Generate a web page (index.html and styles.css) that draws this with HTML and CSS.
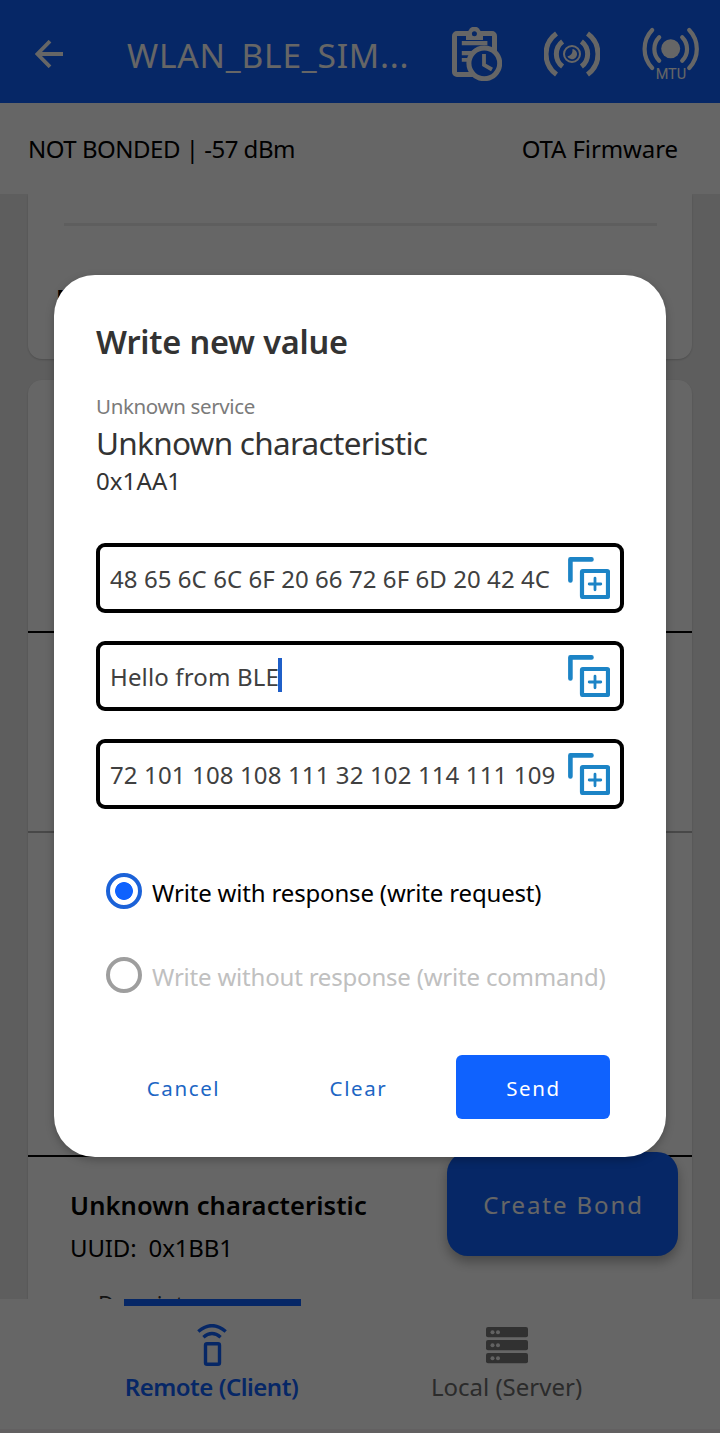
FILE: index.html
```html
<!DOCTYPE html>
<html lang="en">
<head>
<meta charset="utf-8">
<title>Write new value</title>
<link rel="stylesheet" href="styles.css">
</head>
<body>
<svg class="defs" width="0" height="0">
  <symbol id="copy-add" viewBox="0 0 42 42">
    <path d="M2.4 23.5V2.4H23.5" fill="none" stroke="#1c84c6" stroke-width="4.6" stroke-linecap="round" stroke-linejoin="round"/>
    <rect x="14" y="14" width="26" height="26" rx="0.8" fill="none" stroke="#1c84c6" stroke-width="4.2"/>
    <path d="M27 21.2v11.6M21.2 27h11.6" stroke="#1c84c6" stroke-width="2.8" stroke-linecap="round"/>
  </symbol>
</svg>
<div class="app">
  <header class="toolbar">
    <svg width="28" height="28" viewBox="0 0 28 28" fill="none" stroke="#fff" stroke-width="3.8"><path d="M28 14H2.6M15 1.2 2.4 14 15 26.8"/></svg>
    <h1 class="device">WLAN_BLE_SIM...</h1>
    <div class="actions">
      <svg width="50" height="54" viewBox="0 0 50 54">
        <rect x="2.5" y="6.5" width="40" height="41" rx="2.5" fill="none" stroke="#fff" stroke-width="5"/>
        <circle cx="22.4" cy="6" r="6.3" fill="#fff"/>
        <path d="M14 4h17v9H14z" fill="#fff"/>
        <circle cx="22.4" cy="6.8" r="2.5" fill="#0f62fe"/>
        <path d="M9.8 14h25.6v4.3H9.8zM9.8 24h12v4.3h-12zM9.8 31h8v3.8h-8z" fill="#fff"/>
        <circle cx="32.3" cy="36.3" r="15.4" fill="#0f62fe" stroke="#fff" stroke-width="5"/>
        <path d="M32 27v10.8l8 4.7" fill="none" stroke="#fff" stroke-width="3.8"/>
      </svg>
      <svg width="56" height="48" viewBox="-28 -24 56 48" fill="none" stroke="#fff" stroke-width="5">
        <path d="M-15.5-20.5a25.3 25.3 0 0 0 0 41M15.5-20.5a25.3 25.3 0 0 1 0 41M-9.4-12.6a15.8 15.8 0 0 0 0 25.2M9.4-12.6a15.8 15.8 0 0 1 0 25.2"/>
        <circle r="8" stroke-width="2"/>
        <path d="M0.5-5A5.1 5.1 0 1 1-4.6 2.4Q1 1.4 0.5-5z" fill="#fff" stroke="none"/>
      </svg>
      <svg width="58" height="58" viewBox="0 0 58 58" fill="none" stroke="#fff" stroke-width="4.2" stroke-linecap="round">
        <path d="M10.2 5a27.5 27.5 0 0 0 0 38M47.2 5a27.5 27.5 0 0 1 0 38M17.2 12.2a16.8 16.8 0 0 0 0 23.6M40.2 12.2a16.8 16.8 0 0 1 0 23.6"/>
        <circle cx="28.7" cy="23.7" r="9.5" fill="#fff" stroke="none"/>
        <text class="mtu-label" x="28.9" y="53.5" text-anchor="middle">MTU</text>
      </svg>
    </div>
  </header>
  <div class="status">
    <span class="bond">NOT BONDED | -57 dBm</span>
    <span class="ota">OTA Firmware</span>
  </div>
  <main class="services">
    <section class="card card-first">
      <hr class="rule">
      <div class="more">More Info</div>
    </section>
    <section class="card card-list">
      <div class="row row-a"></div>
      <div class="row row-b"></div>
      <div class="row row-c"></div>
      <div class="char">
        <div class="char-name">Unknown characteristic</div>
        <div class="char-uuid">UUID:&nbsp; 0x1BB1</div>
        <div class="char-desc">Descriptors</div>
      </div>
    </section>
  </main>
  <nav class="tabs">
    <div class="tab active">
      <svg width="30" height="42" viewBox="0 0 30 42" fill="none" stroke="#0f62fe" stroke-width="3.4">
        <path d="M1.3 7.5Q15-4.2 28.7 7.5M6.4 13.2Q15 6 23.6 13.2"/>
        <rect x="8.5" y="19.7" width="14" height="20.6" rx="1.5"/>
      </svg>
      <span class="tab-label">Remote (Client)</span>
    </div>
    <div class="tab">
      <svg width="42" height="42" viewBox="0 0 42 42">
        <g fill="#7c7c7c"><rect y="3" width="42" height="10.3" rx="2"/><rect y="16" width="42" height="10.3" rx="2"/><rect y="29" width="42" height="10.3" rx="2"/></g>
        <g fill="#f4f4f4"><circle cx="6.5" cy="8.2" r="2"/><circle cx="12" cy="8.2" r="2"/><circle cx="6.5" cy="21.2" r="2"/><circle cx="12" cy="21.2" r="2"/><circle cx="6.5" cy="34.2" r="2"/><circle cx="12" cy="34.2" r="2"/></g>
      </svg>
      <span class="tab-label">Local (Server)</span>
    </div>
  </nav>
  <div class="fab">Create Bond</div>
  <div class="scrim">
    <div class="dialog">
      <h2 class="title">Write new value</h2>
      <div class="service">Unknown service</div>
      <div class="characteristic">Unknown characteristic</div>
      <div class="uuid">0x1AA1</div>
      <div class="fields">
        <div class="field"><span class="hex">48 65 6C 6C 6F 20 66 72 6F 6D 20 42 4C</span><svg class="add"><use href="#copy-add"/></svg></div>
        <div class="field"><span class="ascii">Hello from BLE</span><i class="caret"></i><svg class="add"><use href="#copy-add"/></svg></div>
        <div class="field"><span class="dec">72 101 108 108 111 32 102 114 111 109</span><svg class="add"><use href="#copy-add"/></svg></div>
      </div>
      <div class="options">
        <div class="option on"><i class="radio"></i><span>Write with response (write request)</span></div>
        <div class="option off"><i class="radio"></i><span>Write without response (write command)</span></div>
      </div>
      <div class="buttons">
        <div class="btn">Cancel</div>
        <div class="btn">Clear</div>
        <div class="btn send">Send</div>
      </div>
    </div>
  </div>
</div>
</body>
</html>
```
FILE: styles.css
```css
* { box-sizing: border-box; }
body { margin: 0; font-family: "Noto Sans", "Open Sans", sans-serif; font-weight: 400; color: #000; }
h1, h2 { margin: 0; font-weight: inherit; }
svg { display: block; flex: none; }
.defs { position: absolute; }
.app { position: relative; width: 720px; height: 1433px; display: flex; flex-direction: column; overflow: hidden; background: #ebebeb; white-space: nowrap; }

.toolbar { flex: none; height: 103px; display: flex; align-items: center; padding: 5px 20px 0 35px; background: #0f62fe; color: #fff; }
.device { margin-left: 64px; width: 325px; font-size: 33.5px; letter-spacing: .8px; line-height: 46px; padding-top: 2px; }
.actions { display: flex; align-items: center; gap: 42px; }
.mtu-label { font: 400 14.5px Roboto, sans-serif; fill: #fff; stroke: none; }

.status { flex: none; height: 91px; display: flex; align-items: center; justify-content: space-between; padding: 0 42px 0 28px; background: #fff; font-size: 24px; }
.bond { letter-spacing: -.49px; }
.ota { letter-spacing: -.1px; }

.services { flex: none; height: 1105px; padding: 0 28px; display: flex; flex-direction: column; gap: 21px; overflow: hidden; }
.card { flex: none; background: #fff; box-shadow: 0 1px 2px rgba(0,0,0,.18); }
.card-first { height: 165px; padding: 29px 35px 0 28px; border-radius: 0 0 14px 14px; }
.rule { height: 3px; margin: 0 0 0 8px; border: 0; background: #ececec; }
.more { margin-top: 55px; font-size: 24px; line-height: 34px; font-weight: 600; }
.card-list { height: 940px; border-radius: 14px 14px 0 0; }
.row { border-bottom: 2px solid #000; }
.row-a { height: 253px; }
.row-b { height: 200px; border-color: #b4b4b4; }
.row-c { height: 324px; }
.char { padding: 28px 42px 0; }
.char-name { font-size: 25.5px; font-weight: 600; letter-spacing: .1px; line-height: 40px; }
.char-uuid { font-size: 24px; letter-spacing: -.15px; line-height: 40px; margin-top: 3px; }
.char-desc { margin: 13px 0 0 28px; font-size: 22px; line-height: 44px; color: #333; }

.tabs { flex: none; height: 134px; display: flex; padding: 0 66px 0 64px; background: #fff; border-bottom: 4px solid #f4eff2; font-size: 24px; color: #6c6c6c; }
.tab { flex: 1; display: flex; flex-direction: column; align-items: center; padding-top: 25px; }
.tab-label { line-height: 40px; margin-top: 1px; }
.active { color: #0f62fe; font-weight: 600; letter-spacing: -.5px; background: linear-gradient(#0f62fe, #0f62fe) 60px 0 / 177px 7px no-repeat; }

.fab { position: absolute; left: 447px; top: 1152px; width: 231px; height: 104px; border-radius: 21px; background: #0f62fe; color: #fff; box-shadow: 0 6px 12px rgba(0,0,0,.3); font-size: 24px; line-height: 106px; text-align: center; letter-spacing: 1.9px; text-indent: 2px; }

.scrim { position: absolute; inset: 0; padding: 275px 54px 0; background: rgba(0,0,0,.6); }
.dialog { height: 882px; padding: 42px; border-radius: 41px; background: #fff; box-shadow: 0 3px 8px rgba(0,0,0,.25); color: #333; }
.title { font-size: 32.5px; font-weight: 600; letter-spacing: -.2px; line-height: 50px; }
.service { margin-top: 24px; font-size: 20.5px; letter-spacing: -.36px; line-height: 30px; color: #7b7b7b; }
.characteristic { font-size: 31.5px; letter-spacing: -.72px; line-height: 43px; }
.uuid { font-size: 24px; letter-spacing: .1px; line-height: 34px; }
.fields { margin-top: 45px; display: grid; gap: 28px; }
.field { height: 70px; display: flex; align-items: center; padding: 0 10px; border: 4px solid #000; border-radius: 9px; font-size: 24px; color: #404040; }
.hex { letter-spacing: .07px; }
.ascii { letter-spacing: .15px; }
.dec { letter-spacing: .13px; }
.caret { width: 4px; height: 34px; margin: -3px 0 0 -1px; background: #1f5fc8; }
.add { width: 42px; height: 42px; margin-left: auto; }
.options { margin-top: 40px; font-size: 24px; }
.option { height: 84px; display: flex; align-items: center; gap: 10px; padding-left: 10px; }
.on { color: #000; letter-spacing: -.17px; }
.off { color: #c0c0c0; letter-spacing: -.2px; }
.option span { margin-top: 2px; }
.radio { width: 36px; height: 36px; border: 4px solid #9e9e9e; border-radius: 50%; }
.on .radio { border-color: #1b62d8; background: radial-gradient(circle, #0f62fe 8.5px, transparent 9.3px); }
.buttons { margin-top: 38px; padding-left: 10px; display: flex; gap: 21px; }
.btn { width: 154px; height: 64px; border-radius: 6px; text-align: center; font-size: 20.5px; line-height: 66px; letter-spacing: 1.6px; text-indent: 1px; color: #1c66c4; }
.send { background: #0f62fe; color: #fff; }
```
